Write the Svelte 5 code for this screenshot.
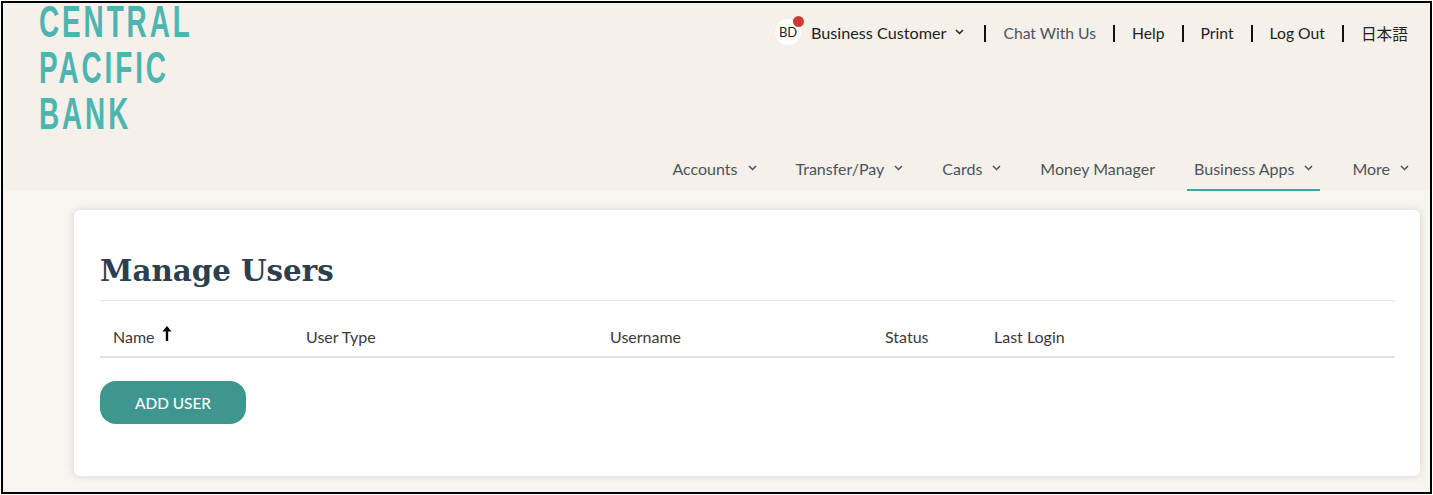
<script>
  const utilityLinks = ['Chat With Us', 'Help', 'Print', 'Log Out', '日本語'];
  const navItems = [
    { label: 'Accounts', menu: true },
    { label: 'Transfer/Pay', menu: true },
    { label: 'Cards', menu: true },
    { label: 'Money Manager', menu: false },
    { label: 'Business Apps', menu: true, active: true },
    { label: 'More', menu: true }
  ];
  const columns = [
    { label: 'Name', width: 193, sorted: true },
    { label: 'User Type', width: 304 },
    { label: 'Username', width: 275 },
    { label: 'Status', width: 109 },
    { label: 'Last Login', width: 200 }
  ];
</script>

{#snippet chevron()}
  <svg class="chevron" width="9" height="6" viewBox="0 0 9 6" fill="none">
    <path d="M1 1l3.5 3.5L8 1" stroke="currentColor" stroke-width="1.5" />
  </svg>
{/snippet}

<div class="frame">
  <header class="header">
    <div class="logo">
      <span>CENTRAL</span>
      <span>PACIFIC</span>
      <span>BANK</span>
    </div>
    <div class="header-right">
      <div class="utility">
        <div class="customer">
          <span class="avatar">BD<i class="dot"></i></span>
          <span class="customer-name">Business Customer</span>
          {@render chevron()}
        </div>
        {#each utilityLinks as link}
          <span class="sep"></span>
          <a href="#top" class="util-link">{link}</a>
        {/each}
      </div>
      <nav class="nav">
        {#each navItems as item}
          <a href="#top" class="nav-item" class:active={item.active}>
            {item.label}
            {#if item.menu}{@render chevron()}{/if}
          </a>
        {/each}
      </nav>
    </div>
  </header>

  <main class="content">
    <section class="card">
      <h1>Manage Users</h1>
      <div class="table-head">
        {#each columns as col}
          <div class="col" style="width: {col.width}px">
            {col.label}
            {#if col.sorted}
              <svg class="sort" width="12" height="17" viewBox="0 0 12 17">
                <path d="M6 1L1.5 6.5H4.8V16H7.2V6.5H10.5Z" fill="#000" />
              </svg>
            {/if}
          </div>
        {/each}
      </div>
      <button class="add-user" type="button">ADD USER</button>
    </section>
  </main>
</div>

<style>
  :global(body) {
    margin: 0;
    background: #fff;
  }

  .frame {
    box-sizing: border-box;
    width: 1431px;
    height: 493px;
    margin: 1px;
    display: flex;
    flex-direction: column;
    background: #f9f6f2;
    border: 2px solid #000;
    font-family: 'Lato', 'Noto Sans CJK JP', sans-serif;
    color: #333f48;
    overflow: hidden;
  }

  .header {
    height: 188px;
    flex: none;
    display: flex;
    justify-content: space-between;
    background: #f5f0ea;
  }

  .logo {
    display: flex;
    flex-direction: column;
    padding: 0 0 0 36px;
    margin-top: -4px;
    font-family: 'Liberation Sans', sans-serif;
    font-weight: 700;
    font-size: 45px;
    line-height: 46px;
    letter-spacing: 4.7px;
    color: #4cb5b0;
    transform: scaleX(0.62);
    transform-origin: 36px 0;
    width: 260px;
  }

  .header-right {
    display: flex;
    flex-direction: column;
    justify-content: space-between;
    align-items: flex-end;
  }

  .utility {
    display: flex;
    align-items: center;
    margin-top: 18px;
    padding-right: 22px;
    font-size: 15.7px;
  }

  .customer {
    display: flex;
    align-items: center;
    margin-top: -2px;
    color: #222;
  }

  .customer-name {
    font-size: 16.2px;
  }

  .avatar {
    position: relative;
    width: 26px;
    height: 26px;
    border-radius: 50%;
    background: #fff;
    display: flex;
    align-items: center;
    justify-content: center;
    font-size: 13px;
    margin-right: 10px;
    color: #222;
  }

  .dot {
    position: absolute;
    top: -3px;
    right: -3px;
    width: 11px;
    height: 11px;
    border-radius: 50%;
    background: #d03a35;
  }

  .customer .chevron {
    margin-left: 9px;
  }

  .sep {
    width: 2px;
    height: 17px;
    background: #111;
    margin: 0 17px;
  }

  .customer + .sep {
    margin-left: 20px;
  }

  .util-link {
    color: #222;
    text-decoration: none;
  }

  .customer + .sep + .util-link {
    color: #4a545c;
  }

  .nav {
    display: flex;
    align-items: stretch;
    padding-right: 14px;
    gap: 25px;
    font-size: 16px;
  }

  .nav-item {
    display: flex;
    align-items: center;
    gap: 10px;
    height: 40px;
    padding: 0 7px 4px;
    box-sizing: border-box;
    border-bottom: 2px solid transparent;
    color: #4a545c;
    text-decoration: none;
  }

  .nav-item.active {
    border-bottom-color: #3fa79c;
  }

  .content {
    flex: 1;
    padding: 19px 10px 16px 71px;
    display: flex;
  }

  .card {
    flex: 1;
    background: #fff;
    border-radius: 6px;
    box-shadow: 0 0 8px rgba(90, 80, 70, 0.22);
    padding: 0 25px 0 26px;
  }

  h1 {
    margin: 0;
    padding: 42px 0 10px;
    font-family: 'DejaVu Serif', serif;
    font-size: 29.3px;
    line-height: 38px;
    font-weight: 700;
    color: #2c3e50;
    border-bottom: 1px solid #e4e4e4;
  }

  .table-head {
    display: flex;
    height: 57px;
    align-items: center;
    box-sizing: border-box;
    padding: 16px 0 0 13px;
    border-bottom: 2px solid #e2e2e2;
    font-size: 16px;
    color: #3a3a3a;
  }

  .col {
    flex: none;
    display: flex;
    align-items: center;
    gap: 6px;
  }

  .sort {
    margin-top: -6px;
  }

  .add-user {
    display: block;
    margin-top: 23px;
    width: 146px;
    height: 43px;
    border: none;
    border-radius: 16px;
    background: #3f968f;
    color: #fff;
    font-family: inherit;
    font-size: 15.4px;
    font-weight: 500;
  }
</style>
